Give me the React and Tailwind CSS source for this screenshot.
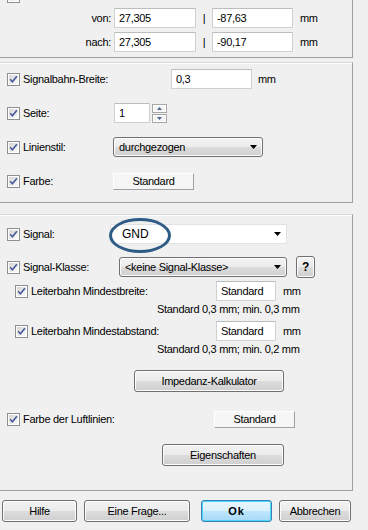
import clsx from 'clsx'

const Check = ({ className }) => (
  <span className={clsx('flex h-[13px] w-[13px] shrink-0 items-center justify-center border border-[#8e8f8f] bg-white p-px', className)}>
    <span className="flex h-full w-full items-center justify-center bg-[linear-gradient(135deg,#d6d6d6,#fbfbfb)]">
      <svg width="9" height="9" viewBox="0 0 9 9">
        <path d="M1.2 4.3 L3.4 6.8 L7.9 1.2" fill="none" stroke="#4b5c9c" strokeWidth="1.7" />
      </svg>
    </span>
  </span>
)

const Arrow = () => (
  <svg width="7" height="4" viewBox="0 0 7 4" className="shrink-0">
    <path d="M0 0h7L3.5 4z" fill="#000" />
  </svg>
)

const TextBox = ({ value, className }) => (
  <div className={clsx('flex h-[20px] items-center border border-[#d0d0d0] border-t-[#bdbdbd] bg-white pl-[4px]', className)}>
    {value}
  </div>
)

const FlatButton = ({ children, className }) => (
  <div className={clsx('flex h-[17px] items-center justify-center border border-t-white border-l-white border-r-[#a0a0a0] border-b-[#a0a0a0] bg-[#f6f6f6]', className)}>
    {children}
  </div>
)

const vista = 'border border-[#707070] rounded-[3px] bg-[linear-gradient(to_bottom,#f2f2f2_0%,#ebebeb_50%,#dddddd_50%,#cfcfcf_100%)] shadow-[inset_0_0_0_1px_#fcfcfc]'

const Button = ({ children, className }) => (
  <div className={clsx('flex h-[22px] items-center justify-center', vista, className)}>{children}</div>
)

const Combo = ({ value, className }) => (
  <div className={clsx('flex h-[20px] items-center justify-between pl-[5px] pr-[5px]', vista, className)}>
    <span>{value}</span>
    <Arrow />
  </div>
)

const SpinBtn = ({ up }) => (
  <div className="flex h-[9px] w-[15px] items-center justify-center border border-[#a6a6a6] bg-[#f4f4f4] shadow-[inset_0_0_0_1px_#fff]">
    <svg width="5" height="3" viewBox="0 0 5 3">
      <path d={up ? 'M0 3h5L2.5 0z' : 'M0 0h5L2.5 3z'} fill="#4c6590" />
    </svg>
  </div>
)

const panel = 'w-[353px] border-r border-b border-r-[#a0a0a0] border-b-[#a0a0a0]'
const panelTop = 'border-t border-t-[#d6d6d6] shadow-[inset_0_1px_0_#fff]'

export default function App() {
  return (
    <div className="h-[530px] w-[368px] overflow-hidden bg-[#f0f0f0] font-['Liberation_Sans',Arial,sans-serif] text-[11px] tracking-[-0.3px] text-black">
      {/* Position (cut off at the top, as in the dialog) */}
      <div className={clsx(panel, '-mt-[10px] pb-[5px]')}>
        <div className="flex h-[13px] items-center">
          <Check className="ml-[7px]" />
          <span className="ml-[3px]">Position:</span>
        </div>
        {[
          ['von:', '27,305', '-87,63'],
          ['nach:', '27,305', '-90,17'],
        ].map(([label, a, b], i) => (
          <div key={label} className={clsx('flex h-[20px] items-center', i === 0 ? 'mt-[5px]' : 'mt-[4px]')}>
            <span className="w-[111px] text-right">{label}</span>
            <TextBox value={a} className="ml-[3px] w-[82px]" />
            <span className="w-[16px] text-center">|</span>
            <TextBox value={b} className="w-[81px]" />
            <span className="ml-[7px]">mm</span>
          </div>
        ))}
      </div>

      {/* Signalbahn */}
      <div className={clsx(panel, panelTop, 'mt-[4px] pt-[6px] pb-[11px]')}>
        <div className="flex h-[20px] items-center">
          <Check className="ml-[7px]" />
          <span className="ml-[3px] w-[148px]">Signalbahn-Breite:</span>
          <TextBox value="0,3" className="w-[81px]" />
          <span className="ml-[6px]">mm</span>
        </div>
        <div className="mt-[14px] flex h-[20px] items-center">
          <Check className="ml-[7px]" />
          <span className="ml-[3px] w-[91px]">Seite:</span>
          <TextBox value="1" className="w-[36px]" />
          <div className="ml-[2px] flex flex-col gap-px">
            <SpinBtn up />
            <SpinBtn />
          </div>
        </div>
        <div className="mt-[14px] flex h-[20px] items-center">
          <Check className="ml-[7px]" />
          <span className="ml-[3px] w-[90px]">Linienstil:</span>
          <Combo value="durchgezogen" className="w-[150px]" />
        </div>
        <div className="mt-[14px] flex h-[20px] items-center">
          <Check className="ml-[7px]" />
          <span className="ml-[3px] w-[90px]">Farbe:</span>
          <FlatButton className="w-[81px]">Standard</FlatButton>
        </div>
      </div>

      {/* Signal */}
      <div className={clsx(panel, panelTop, 'mt-[11px] pt-[9px] pb-[24px]')}>
        <div className="flex h-[20px] items-center">
          <Check className="ml-[7px]" />
          <span className="ml-[3px] w-[87px]">Signal:</span>
          <div className="relative flex h-[20px] w-[177px] items-center justify-between border border-[#e2e2e2] bg-white pl-[11px] pr-[5px]">
            <span className="text-[12px] tracking-normal">GND</span>
            <Arrow />
            <div className="absolute -left-[2px] -top-[7px] h-[35px] w-[62px] rounded-[50%] border-[3px] border-[#2f5b87]" />
          </div>
        </div>
        <div className="mt-[13px] flex h-[20px] items-center">
          <Check className="ml-[7px]" />
          <span className="ml-[3px] w-[96px]">Signal-Klasse:</span>
          <Combo value="<keine Signal-Klasse>" className="w-[168px]" />
          <Button className="ml-[9px] h-[20px] w-[19px] text-[12px] font-bold">?</Button>
        </div>
        <div className="mt-[4px] flex h-[20px] items-center">
          <Check className="ml-[15px]" />
          <span className="ml-[3px] w-[185px]">Leiterbahn Mindestbreite:</span>
          <TextBox value="Standard" className="w-[60px]" />
          <span className="ml-[7px]">mm</span>
        </div>
        <div className="mt-[2px] flex h-[12px] items-center pl-[157px]">Standard 0,3 mm; min. 0,3 mm</div>
        <div className="mt-[6px] flex h-[20px] items-center">
          <Check className="ml-[15px]" />
          <span className="ml-[3px] w-[185px]">Leiterbahn Mindestabstand:</span>
          <TextBox value="Standard" className="w-[60px]" />
          <span className="ml-[7px]">mm</span>
        </div>
        <div className="mt-[2px] flex h-[12px] items-center pl-[157px]">Standard 0,3 mm; min. 0,2 mm</div>
        <div className="mt-[15px] flex">
          <Button className="ml-[134px] w-[150px]">Impedanz-Kalkulator</Button>
        </div>
        <div className="mt-[17px] flex h-[20px] items-center">
          <Check className="ml-[7px]" />
          <span className="ml-[3px] w-[191px]">Farbe der Luftlinien:</span>
          <FlatButton className="w-[81px]">Standard</FlatButton>
        </div>
        <div className="mt-[15px] flex">
          <Button className="ml-[162px] w-[122px]">Eigenschaften</Button>
        </div>
      </div>

      {/* Dialog buttons */}
      <div className="mt-[9px] flex">
        <Button className="ml-[2px] w-[75px]">Hilfe</Button>
        <Button className="ml-[7px] w-[106px]">Eine Frage...</Button>
        <div className="ml-[11px] flex h-[22px] w-[71px] items-center justify-center rounded-[3px] border border-[#3c7fb1] bg-[linear-gradient(to_bottom,#eaf6fd_0%,#d9f0fc_50%,#bee6fd_50%,#a7d9f5_100%)] font-bold tracking-[1px] shadow-[inset_0_0_0_1px_#48d8fb]">
          Ok
        </div>
        <Button className="ml-[7px] w-[72px]">Abbrechen</Button>
      </div>
    </div>
  )
}
